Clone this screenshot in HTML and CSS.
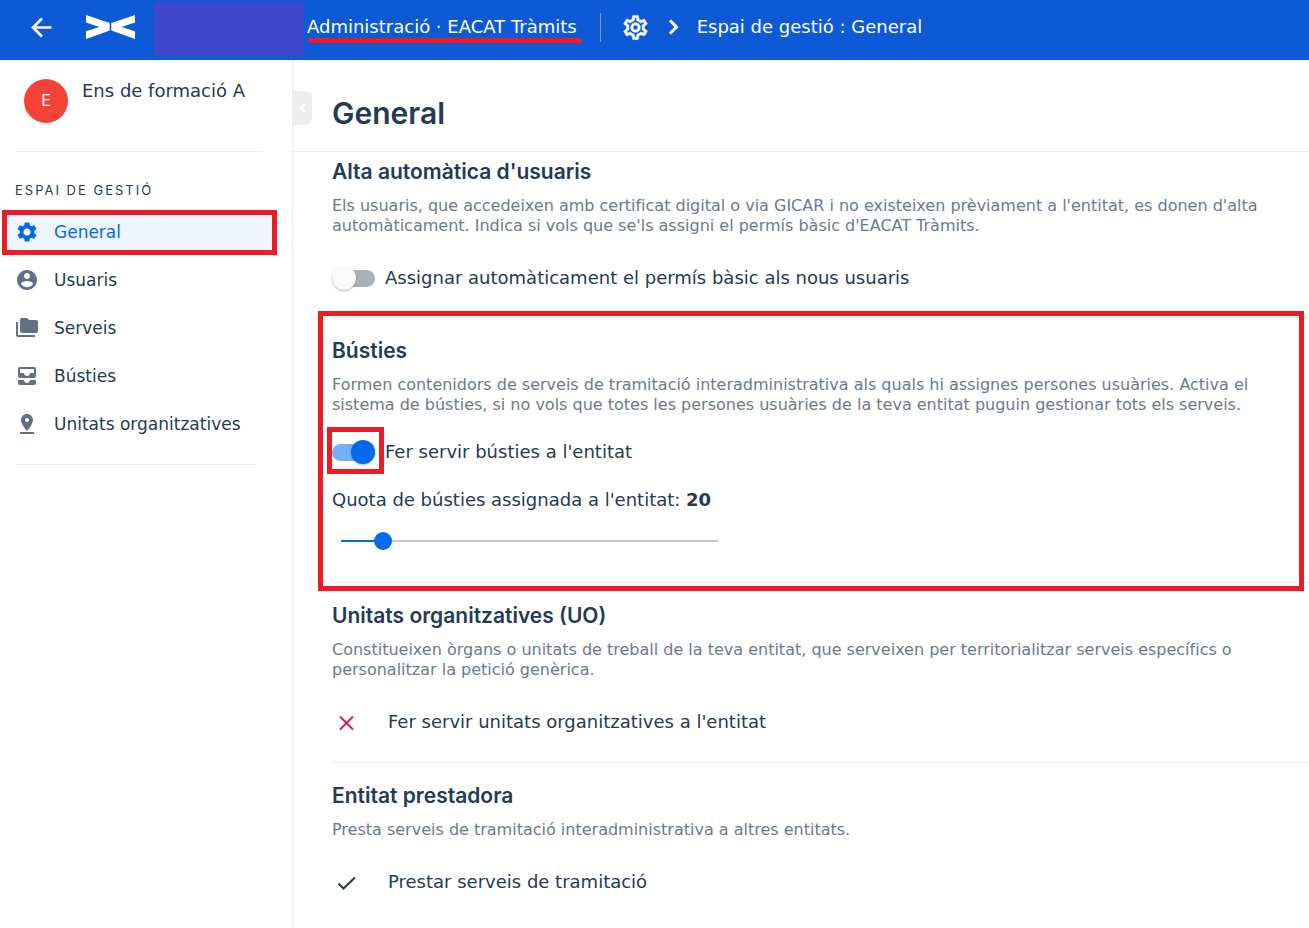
FILE: index.html
```html
<!DOCTYPE html>
<html lang="ca">
<head>
    <meta charset="UTF-8">
    <meta name="viewport" content="width=device-width, initial-scale=1.0">
    <title>Espai de gestió : General</title>
    <link rel="stylesheet" href="styles.css">
</head>
<body>
    <header class="topbar">
        <button type="button" class="icon-button" aria-label="Enrere">
            <svg width="24" height="24" viewBox="0 0 24 24" fill="none" stroke="currentColor" stroke-width="2.6"><path d="M22.500 12.500H4M13 3.500l-9 9 9 9"/></svg>
        </button>
        <svg class="logo" width="50" height="24" viewBox="0 0 50 24" fill="#fff"><path d="M0 0L23.700 8V15.500L0 24V16.300L13.500 12L0 7.600zM49 0L25.300 8V15.500L49 24V16.300L35.500 12L49 7.600z"/></svg>
        <div class="brand-block"></div>
        <a class="app-name" href="#">Administració · EACAT Tràmits</a>
        <div class="divider"></div>
        <svg class="gear" width="29" height="29" viewBox="0 0 24 24" fill="currentColor" stroke="currentColor" stroke-width="0.4"><path d="M19.430 12.980c.040-.320.070-.640.070-.980s-.030-.660-.070-.980l2.110-1.650c.190-.150.240-.420.120-.640l-2-3.460c-.120-.220-.390-.300-.610-.220l-2.490 1c-.520-.400-1.080-.730-1.690-.980l-.380-2.650C14.460 2.180 14.250 2 14 2h-4c-.250 0-.460.180-.490.420l-.380 2.650c-.610.250-1.170.590-1.690.980l-2.490-1c-.230-.090-.490 0-.610.220l-2 3.460c-.130.220-.070.490.120.640l2.110 1.650c-.040.320-.070.650-.070.980s.030.660.070.980l-2.110 1.650c-.190.150-.240.420-.120.640l2 3.460c.120.220.390.300.610.220l2.490-1c.520.400 1.080.730 1.690.980l.380 2.650c.030.240.240.420.490.420h4c.250 0 .460-.180.490-.420l.380-2.650c.610-.250 1.170-.590 1.690-.980l2.490 1c.230.090.490 0 .610-.220l2-3.460c.120-.220.070-.490-.120-.640l-2.110-1.650zm-1.980-1.710c.040.310.050.520.050.730s-.020.430-.050.730l-.140 1.130.890.700 1.080.840-.700 1.210-1.270-.510-1.040-.420-.900.680c-.430.320-.840.560-1.250.730l-1.060.430-.160 1.130-.200 1.350h-1.400l-.190-1.350-.160-1.130-1.060-.430c-.430-.180-.830-.410-1.230-.710l-.910-.700-1.060.430-1.270.510-.700-1.210 1.080-.840.890-.700-.140-1.130c-.030-.310-.050-.540-.050-.740s.020-.430.050-.730l.140-1.130-.890-.700-1.080-.840.700-1.210 1.270.510 1.040.420.900-.680c.430-.320.840-.560 1.250-.730l1.060-.430.160-1.130.200-1.350h1.390l.190 1.350.160 1.130 1.060.430c.430.180.830.410 1.230.710l.910.700 1.060-.430 1.270-.510.700 1.210-1.070.850-.890.700.140 1.130zM12 8c-2.210 0-4 1.790-4 4s1.790 4 4 4 4-1.790 4-4-1.790-4-4-4zm0 6c-1.100 0-2-.900-2-2s.900-2 2-2 2 .900 2 2-.900 2-2 2z"/></svg>
        <svg class="chevron" width="12" height="16" viewBox="0 0 12 16" fill="none" stroke="currentColor" stroke-width="3"><path d="M2 1.500L8.500 8L2 14.500"/></svg>
        <span class="crumb">Espai de gestió : General</span>
    </header>

    <div class="layout">
        <aside class="sidebar">
            <div class="entity">
                <div class="avatar">E</div>
                <div class="entity-name">Ens de formació A</div>
            </div>
            <div class="nav-title">ESPAI DE GESTIÓ</div>
            <nav class="nav">
                <a class="nav-item active" href="#">
                    <svg width="24" height="24" viewBox="0 0 24 24" fill="currentColor"><path d="M19.140 12.940c.040-.300.060-.610.060-.940 0-.320-.020-.640-.070-.940l2.030-1.580c.180-.140.230-.410.120-.610l-1.920-3.320c-.120-.220-.370-.290-.590-.220l-2.390.960c-.500-.380-1.030-.700-1.620-.940l-.360-2.540c-.040-.240-.240-.410-.480-.410h-3.840c-.240 0-.430.170-.470.410l-.360 2.540c-.590.240-1.130.570-1.620.940l-2.390-.960c-.220-.080-.470 0-.590.220L2.740 8.870c-.120.210-.080.470.120.610l2.030 1.580c-.050.300-.090.630-.090.940s.020.640.070.940l-2.030 1.580c-.180.140-.230.410-.120.610l1.920 3.320c.120.220.370.290.590.220l2.390-.960c.500.380 1.030.700 1.620.940l.360 2.540c.050.240.240.410.480.410h3.840c.240 0 .440-.170.470-.410l.360-2.540c.590-.240 1.130-.560 1.620-.940l2.390.960c.220.080.470 0 .590-.220l1.920-3.320c.120-.220.070-.470-.120-.610l-2.010-1.580zM12 15.600c-1.980 0-3.600-1.620-3.600-3.600s1.620-3.600 3.600-3.600 3.600 1.620 3.600 3.600-1.620 3.600-3.600 3.600z"/></svg>
                    General
                </a>
                <a class="nav-item" href="#">
                    <svg width="24" height="24" viewBox="0 0 24 24" fill="currentColor"><path d="M12 2C6.480 2 2 6.480 2 12s4.480 10 10 10 10-4.480 10-10S17.520 2 12 2zm0 3c1.660 0 3 1.340 3 3s-1.340 3-3 3-3-1.340-3-3 1.340-3 3-3zm0 14.200c-2.500 0-4.710-1.280-6-3.220.030-1.990 4-3.080 6-3.080 1.990 0 5.970 1.090 6 3.080-1.290 1.940-3.500 3.220-6 3.220z"/></svg>
                    Usuaris
                </a>
                <a class="nav-item" href="#">
                    <svg width="24" height="24" viewBox="0 0 24 24" fill="currentColor"><path d="M3 6H1v13c0 1.100.900 2 2 2h17v-2H3V6zm18-2h-7l-2-2H7c-1.100 0-1.990.900-1.990 2L5 15c0 1.100.900 2 2 2h14c1.100 0 2-.900 2-2V6c0-1.100-.900-2-2-2z"/></svg>
                    Serveis
                </a>
                <a class="nav-item" href="#">
                    <svg width="24" height="24" viewBox="0 0 24 24" fill="currentColor"><path d="M19 3H5c-1.100 0-2 .900-2 2v7c0 1.100.900 2 2 2h14c1.100 0 2-.900 2-2V5c0-1.100-.900-2-2-2zm0 6h-4c0 1.620-1.380 3-3 3s-3-1.380-3-3H5V5h14v4zm-4 7h6v3c0 1.100-.900 2-2 2H5c-1.100 0-2-.900-2-2v-3h6c0 1.660 1.340 3 3 3s3-1.340 3-3z"/></svg>
                    Bústies
                </a>
                <a class="nav-item" href="#">
                    <svg width="24" height="24" viewBox="0 0 24 24" fill="currentColor"><path d="M18 8c0-3.310-2.690-6-6-6S6 4.690 6 8c0 4.500 6 11 6 11s6-6.500 6-11zm-8 0c0-1.100.900-2 2-2s2 .900 2 2-.890 2-2 2c-1.100 0-2-.900-2-2zM5 20v2h14v-2H5z"/></svg>
                    Unitats organitzatives
                </a>
            </nav>
        </aside>

        <main class="content">
            <div class="page-header">
                <button type="button" class="collapse" aria-label="Amaga el menú">
                    <svg width="8" height="10" viewBox="0 0 8 10" fill="none" stroke="#fff" stroke-width="2"><path d="M6 1L2 5l4 4"/></svg>
                </button>
                <h1>General</h1>
            </div>

            <section class="section first">
                <h2>Alta automàtica d'usuaris</h2>
                <p class="description">Els usuaris, que accedeixen amb certificat digital o via GICAR i no existeixen prèviament a l'entitat, es donen d'alta automàticament. Indica si vols que se'ls assigni el permís bàsic d'EACAT Tràmits.</p>
                <div class="option">
                    <input type="checkbox" class="toggle" id="assignar">
                    <label for="assignar">Assignar automàticament el permís bàsic als nous usuaris</label>
                </div>
            </section>

            <section class="section highlighted">
                <h2>Bústies</h2>
                <p class="description">Formen contenidors de serveis de tramitació interadministrativa als quals hi assignes persones usuàries. Activa el sistema de bústies, si no vols que totes les persones usuàries de la teva entitat puguin gestionar tots els serveis.</p>
                <div class="option">
                    <span class="toggle-mark"><input type="checkbox" class="toggle" id="busties" checked></span>
                    <label for="busties">Fer servir bústies a l'entitat</label>
                </div>
                <label class="quota" for="quota">Quota de bústies assignada a l'entitat: <b id="quotaValue">20</b></label>
                <input type="range" class="slider" id="quota" min="10" max="100" value="20">
            </section>

            <section class="section">
                <h2>Unitats organitzatives (UO)</h2>
                <p class="description">Constitueixen òrgans o unitats de treball de la teva entitat, que serveixen per territorialitzar serveis específics o personalitzar la petició genèrica.</p>
                <div class="option status">
                    <svg width="30" height="24" viewBox="0 0 30 24" fill="none" stroke="#d81b60" stroke-width="2"><path d="M8 6.500l13 13M21 6.500l-13 13"/></svg>
                    <span>Fer servir unitats organitzatives a l'entitat</span>
                </div>
            </section>

            <section class="section">
                <h2>Entitat prestadora</h2>
                <p class="description">Presta serveis de tramitació interadministrativa a altres entitats.</p>
                <div class="option status">
                    <svg width="30" height="24" viewBox="0 0 30 24" fill="none" stroke="currentColor" stroke-width="2"><path d="M6.500 13.500l5 5L23 7.500"/></svg>
                    <span>Prestar serveis de tramitació</span>
                </div>
            </section>
        </main>
    </div>

    <script>
        const quota = document.getElementById('quota');

        quota.addEventListener('input', () => {
            const percent = (quota.value - quota.min) / (quota.max - quota.min) * 100;
            quota.style.setProperty('--fill', percent + '%');
            document.getElementById('quotaValue').textContent = quota.value;
        });
    </script>
</body>
</html>
```

FILE: styles.css
```css
* {
    box-sizing: border-box;
}

body {
    margin: 0;
    min-height: 100vh;
    display: flex;
    flex-direction: column;
    font-family: "DejaVu Sans", sans-serif;
    font-size: 18px;
    line-height: 24px;
    color: #243b53;
    background-color: #fff;
}

a {
    color: inherit;
    text-decoration: none;
}

button {
    border: none;
    padding: 0;
    cursor: pointer;
}

svg {
    display: block;
    flex: none;
}

.topbar {
    display: flex;
    align-items: center;
    height: 60px;
    padding: 0 0 6px 29px;
    background-color: #0e5ad6;
    color: #fff;
}

.icon-button {
    background: none;
    color: inherit;
}

.logo {
    margin-left: 33px;
}

.brand-block {
    width: 150px;
    height: 54px;
    margin: 4px 3px 0 18px;
    background-color: #3f48cc;
}

.app-name {
    position: relative;
}

.app-name::after {
    content: "";
    position: absolute;
    left: 1px;
    right: -5px;
    bottom: -4px;
    height: 5px;
    border-radius: 3px;
    background-color: #ed1c24;
}

.divider {
    width: 1px;
    height: 29px;
    margin: 0 20px 0 23px;
    background-color: #6e9ce6;
}

.chevron {
    margin: 0 17px 0 18px;
}

.layout {
    flex: 1;
    display: flex;
}

.sidebar {
    flex: none;
    width: 293px;
    border-right: 1px solid #ebecee;
}

.entity {
    display: flex;
    gap: 14px;
    height: 92px;
    margin: 0 30px 0 15px;
    padding: 19px 0 0 9px;
    border-bottom: 1px solid #ebecee;
}

.avatar {
    width: 44px;
    height: 44px;
    border-radius: 50%;
    background-color: #f44336;
    color: #fff;
    font-size: 16px;
    line-height: 44px;
    text-align: center;
}

.nav-title {
    margin: 26px 15px 8px;
    font-family: Inter, sans-serif;
    font-size: 13px;
    letter-spacing: 2px;
}

.nav {
    display: flex;
    flex-direction: column;
    gap: 3px;
    margin: 0 15px 0 2px;
    font-size: 17px;
}

.nav::after {
    content: "";
    height: 1px;
    margin: 14px 20px 0 13px;
    background-color: #ebecee;
}

.nav-item {
    display: flex;
    align-items: center;
    gap: 15px;
    height: 45px;
    padding: 0 0 2px 8px;
    border: 5px solid transparent;
}

.nav-item svg {
    color: #627084;
}

.nav-item.active {
    border-color: #ed1c24;
    background-color: #eff6ff;
    color: #006bea;
}

.nav-item.active svg {
    color: #006bea;
}

.content {
    flex: 1;
    min-width: 0;
}

.page-header {
    display: flex;
    align-items: center;
    gap: 20px;
    height: 92px;
    padding-top: 14px;
    border-bottom: 1px solid #ebecee;
}

.collapse {
    display: flex;
    align-items: center;
    justify-content: center;
    width: 19px;
    height: 34px;
    margin-bottom: 10px;
    border-radius: 0 6px 6px 0;
    background-color: #edeef0;
}

h1,
h2 {
    margin: 0;
    font-family: Inter, sans-serif;
    font-weight: 600;
}

h1 {
    font-size: 30px;
    line-height: 36px;
}

h2 {
    font-size: 21px;
    line-height: 24px;
}

.section {
    margin-left: 39px;
    padding: 21px 0 28px;
    border-bottom: 1px solid #ebecee;
}

.section:last-child {
    border-bottom: none;
}

.section.first {
    padding: 8px 0 27px;
}

.description {
    margin: 12px 32px 30px 0;
    font-size: 16px;
    line-height: 20px;
    color: #6b7a8d;
}

.option {
    display: flex;
    align-items: center;
    gap: 10px;
}

.option.status {
    gap: 26px;
}

/* red frame round the whole section */
.highlighted {
    position: relative;
    padding-bottom: 32px;
}

.highlighted::after {
    content: "";
    position: absolute;
    top: -7px;
    right: 5px;
    bottom: -9px;
    left: -14px;
    border: 5px solid #ed1c24;
    pointer-events: none;
}

.highlighted .description {
    margin-bottom: 25px;
}

.toggle-mark {
    display: flex;
    position: relative;
}

.toggle-mark::after {
    content: "";
    position: absolute;
    top: -13px;
    right: -9px;
    bottom: -10px;
    left: -5px;
    border: 5px solid #ed1c24;
    pointer-events: none;
}

.toggle {
    appearance: none;
    position: relative;
    display: flex;
    align-items: center;
    width: 43px;
    height: 24px;
    margin: 0;
    cursor: pointer;
}

.toggle::before {
    content: "";
    width: 43px;
    height: 17px;
    border-radius: 9px;
    background-color: #a9b1bb;
}

.toggle::after {
    content: "";
    position: absolute;
    left: 0;
    width: 24px;
    height: 24px;
    border-radius: 50%;
    background-color: #fafafa;
    box-shadow: 0 1px 2px rgba(0, 0, 0, 0.3);
}

.toggle:checked::before {
    background-color: #75aff5;
}

.toggle:checked::after {
    left: 19px;
    background-color: #006bea;
}

.quota {
    display: block;
    margin: 24px 0 20px;
}

.slider {
    --fill: 11%;
    appearance: none;
    display: block;
    width: 395px;
    max-width: 100%;
    height: 18px;
    margin: 0;
    padding: 0;
    background: none;
    cursor: pointer;
}

.slider::-webkit-slider-runnable-track {
    height: 18px;
    background:
        linear-gradient(to right, #006bea var(--fill), #c4c8cc var(--fill)) center / calc(100% - 18px) 2px no-repeat;
}

.slider::-webkit-slider-thumb {
    appearance: none;
    width: 18px;
    height: 18px;
    border-radius: 50%;
    background-color: #006bea;
}
```
